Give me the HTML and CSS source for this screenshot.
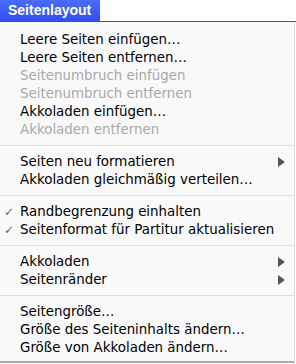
FILE: index.html
```html
<!DOCTYPE html>
<html lang="de">
<head>
  <meta charset="UTF-8">
  <title>Seitenlayout</title>
  <link rel="stylesheet" href="styles.css">
</head>
<body>

  <div class="menubar">
    <span class="title">Seitenlayout</span>
  </div>

  <ul class="menu">
    <li>Leere Seiten einfügen…</li>
    <li>Leere Seiten entfernen…</li>
    <li class="disabled">Seitenumbruch einfügen</li>
    <li class="disabled">Seitenumbruch entfernen</li>
    <li>Akkoladen einfügen…</li>
    <li class="disabled">Akkoladen entfernen</li>
    <li class="sep"></li>
    <li class="sub">Seiten neu formatieren</li>
    <li>Akkoladen gleichmäßig verteilen…</li>
    <li class="sep"></li>
    <li class="checked">Randbegrenzung einhalten</li>
    <li class="checked">Seitenformat für Partitur aktualisieren</li>
    <li class="sep"></li>
    <li class="sub">Akkoladen</li>
    <li class="sub">Seitenränder</li>
    <li class="sep"></li>
    <li>Seitengröße…</li>
    <li>Größe des Seiteninhalts ändern…</li>
    <li>Größe von Akkoladen ändern…</li>
  </ul>

</body>
</html>
```

FILE: styles.css
```css
body {
  margin: 0;
  background: #fff;
  font-family: "DejaVu Sans", sans-serif;
  font-size: 13.4px;
}
.menubar {
  height: 21px;
  border-bottom: 1px solid #555;
  display: flex;
}
.title {
  width: 100px;
  padding-left: 8px;
  box-sizing: border-box;
  background: linear-gradient(#4a6cf8, #2f4fef);
  color: #fff;
  font-family: "Liberation Sans", Arial, sans-serif;
  font-size: 14px;
  font-weight: bold;
  line-height: 21px;
}
.menu {
  list-style: none;
  margin: 0;
  width: 294px;
  padding: 9px 0 4px;
  background: #f9f9f9;
  border-right: 1px solid #ddd;
  border-bottom: 2px solid #aaa;
}
.menu li {
  position: relative;
  height: 18px;
  line-height: 18px;
  padding-left: 20px;
  color: #000;
}
.menu li.disabled { color: #a8a8a8; }
.menu li.sep {
  height: 1px;
  margin: 6px 0 7px;
  padding: 0;
  background: #ddd;
}
.menu li.checked::before {
  content: "✓";
  position: absolute;
  left: 4px;
  color: #666;
  font-size: 12px;
  font-weight: bold;
}
.menu li.sub::after {
  content: "";
  position: absolute;
  right: 9px;
  top: 4px;
  border-left: 7px solid #555;
  border-top: 5px solid transparent;
  border-bottom: 5px solid transparent;
}
```
